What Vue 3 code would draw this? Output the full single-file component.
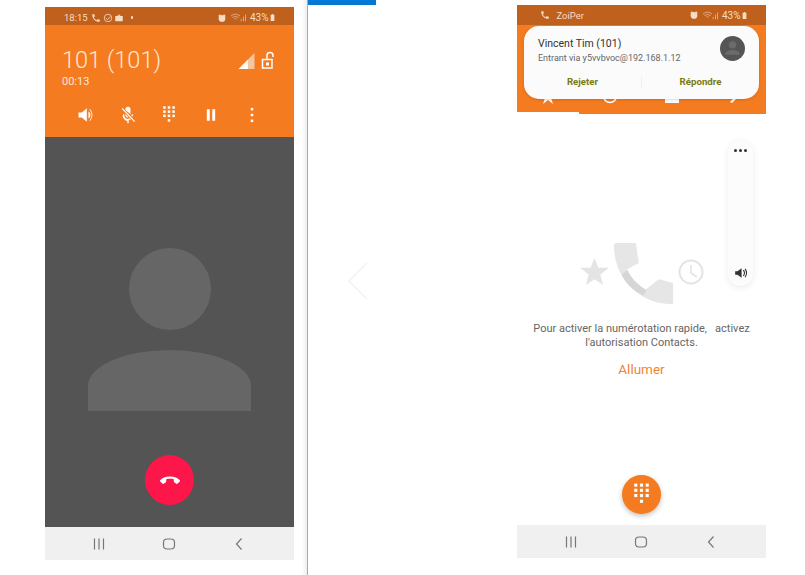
<template>
  <div class="page">
    <!-- Appel en cours -->
    <section class="phone phone-call">
      <div class="status status-call">
        <div class="status-left">
          <span class="time">18:15</span>
          <svg class="st-ic" viewBox="0 0 24 24"><path :d="phonePath" /></svg>
          <svg class="st-ic" viewBox="0 0 24 24"><circle cx="12" cy="12" r="9" fill="none" stroke="#f7d9c0" stroke-width="2" /><path d="M7 12l4 4 7-8" fill="none" stroke="#f7d9c0" stroke-width="2" /></svg>
          <svg class="st-ic" viewBox="0 0 24 24"><path d="M9 4h6v3h6v13H3V7h6zM11 6v1h2V6z" /></svg>
          <span class="dot"></span>
        </div>
        <div class="status-right">
          <svg class="st-ic" viewBox="0 0 24 24"><circle cx="12" cy="13" r="8" /><path d="M3 7l4-4 2 2-4 4zM21 7l-4-4-2 2 4 4z" /></svg>
          <svg class="st-wifi" viewBox="0 0 22 12"><path d="M1 4q6-5 12 0M3 6q4-3 8 0M5.500 8q1.500-1 3 0" fill="none" stroke="#eec0a0" stroke-width="1" /><path d="M14 11h1V8h-1zM17 11h1V5h-1zM20 11h1V2h-1z" fill="#eec0a0" /></svg>
          <span class="batt-txt">43%</span>
          <svg class="st-batt" viewBox="0 0 8 11"><path d="M3 0h2v1h2v10H1V1h2z" /></svg>
        </div>
      </div>
      <div class="call-head">
        <div class="call-top">
          <div>
            <div class="call-name">101 (101)</div>
            <div class="call-time">00:13</div>
          </div>
          <div class="call-state">
            <svg class="signal" viewBox="0 0 17 17"><path d="M17 0v17H10V7z" fill="#f6c6a0" /><path d="M10 7v10H0z" fill="#fff" /></svg>
            <svg class="lock" viewBox="0 0 14 18"><path d="M6 8V4.500a3 3 0 0 1 6 0V6" fill="none" stroke="#fff" stroke-width="1.500" /><path d="M1.500 8.500h9.500v8.500H1.500z" fill="none" stroke="#fff" stroke-width="1.500" /><rect x="5" y="11.500" width="3" height="3" fill="#fff" /></svg>
          </div>
        </div>
        <div class="call-actions">
          <svg class="act" viewBox="0 0 24 24"><path d="M3 9v6h4l6 5V4L7 9z" fill="#fff" /><path d="M15 7.500a5.500 5.500 0 0 1 0 9z" fill="#fff" /><path d="M16.500 5q5.500 7 0 14" fill="none" stroke="#fff" stroke-width="1" /></svg>
          <svg class="act" viewBox="0 0 24 24"><path d="M9 5a3 3 0 0 1 6 0v6l-6-5zM9 10.500V12a3 3 0 0 0 3.800 2.900zM6 11h1.600a4.400 4.400 0 0 0 6.600 5l1.200 1.200a6 6 0 0 1-2.600 1V22h-1.600v-2.800A6.500 6.500 0 0 1 6 11zM18 11a6 6 0 0 1-.8 3l-1.200-1.200a4 4 0 0 0 .4-1.800z" fill="#fff" /><path d="M5 4l15 16" stroke="#fff" stroke-width="1.500" /></svg>
          <svg class="act" viewBox="0 0 24 24"><rect v-for="d in keypadDots" :key="d.x + '-' + d.y" :x="d.x" :y="d.y" width="3" height="3" fill="#fff" /></svg>
          <svg class="act" viewBox="0 0 24 24"><path d="M7 5h3.500v14H7zM13.500 5H17v14h-3.500z" fill="#fff" /></svg>
          <svg class="act" viewBox="0 0 24 24"><rect x="10.500" y="3.500" width="3" height="3" fill="#fff" /><rect x="10.500" y="10.500" width="3" height="3" fill="#fff" /><rect x="10.500" y="17.500" width="3" height="3" fill="#fff" /></svg>
        </div>
      </div>
      <div class="call-body">
        <div class="avatar-head"></div>
        <div class="avatar-body"></div>
        <button class="hangup">
          <svg viewBox="0 0 24 24"><path d="M12 8.500c-4.500 0-8 1.600-9.800 3.800-.3.400-.3.800 0 1.100l2.200 2.200c.4.400.9.400 1.300.1l2.100-1.500c.3-.2.400-.5.400-.8v-2.200c1.200-.4 2.500-.5 3.800-.5s2.600.1 3.800.5v2.200c0 .3.100.6.400.8l2.100 1.500c.4.300.9.300 1.300-.1l2.200-2.200c.3-.3.300-.7 0-1.100C20 10.100 16.500 8.500 12 8.500z" fill="#fff" /></svg>
        </button>
      </div>
      <div class="navbar">
        <svg viewBox="0 0 16 16"><path d="M3.500 2.500v11M8 2.500v11M12.500 2.500v11" /></svg>
        <svg viewBox="0 0 16 16"><rect x="2.500" y="3" width="11" height="10" rx="3.500" /></svg>
        <svg viewBox="0 0 16 16"><path d="M10.500 2.500L5.500 8l5 5.500" /></svg>
      </div>
    </section>

    <div class="divider"></div>

    <div class="middle">
      <div class="blue-bar"></div>
      <svg class="chevron" viewBox="0 0 22 40"><path d="M20 2L2 20l18 18" /></svg>
    </div>

    <!-- Appel entrant -->
    <section class="phone phone-dial">
      <div class="status status-dial">
        <div class="status-left">
          <svg class="st-ic" viewBox="0 0 24 24"><path :d="phonePath" /></svg>
          <span class="app-name">ZoiPer</span>
        </div>
        <div class="status-right">
          <svg class="st-ic" viewBox="0 0 24 24"><circle cx="12" cy="13" r="8" /><path d="M3 7l4-4 2 2-4 4zM21 7l-4-4-2 2 4 4z" /></svg>
          <svg class="st-wifi" viewBox="0 0 22 12"><path d="M1 4q6-5 12 0M3 6q4-3 8 0M5.500 8q1.500-1 3 0" fill="none" stroke="#eec0a0" stroke-width="1" /><path d="M14 11h1V8h-1zM17 11h1V5h-1zM20 11h1V2h-1z" fill="#eec0a0" /></svg>
          <span class="batt-txt">43%</span>
          <svg class="st-batt" viewBox="0 0 8 11"><path d="M3 0h2v1h2v10H1V1h2z" /></svg>
        </div>
      </div>
      <div class="dial-head">
        <div class="tabs">
          <svg viewBox="0 0 16 16"><path d="M8 1l2 5h6l-5 4 2 6-5-4-5 4 2-6-5-4h6z" /></svg>
          <svg viewBox="0 0 16 16"><circle cx="8" cy="8" r="6.500" fill="none" stroke="#fff" stroke-width="1.500" /></svg>
          <svg viewBox="0 0 16 16"><rect x="1" y="2" width="14" height="13" /></svg>
          <svg viewBox="0 0 16 16"><path d="M4 14l6-6 1.500 1.500L6 15z" /></svg>
        </div>
        <div class="tab-line"></div>
      </div>
      <div class="incoming">
        <div class="inc-top">
          <div>
            <div class="inc-name">Vincent Tim (101)</div>
            <div class="inc-sub">Entrant via y5vvbvoc@192.168.1.12</div>
          </div>
          <div class="inc-avatar">
            <svg viewBox="0 0 24 24"><circle cx="12" cy="8.500" r="3.500" fill="#6b6b6b" /><path d="M5 18c0-3 3.500-4.500 7-4.500s7 1.500 7 4.500z" fill="#6b6b6b" /></svg>
          </div>
        </div>
        <div class="inc-actions">
          <span>Rejeter</span>
          <span>Répondre</span>
        </div>
      </div>
      <div class="dial-body">
        <div class="volume">
          <div class="vol-dots"><i></i><i></i><i></i></div>
          <svg class="vol-ic" viewBox="0 0 24 24"><path d="M2 9v6h4l7 5V4L6 9z" fill="#333" /><path d="M16 7q4 5 0 10M19 5q5 7 0 14" fill="none" stroke="#333" stroke-width="1.800" /></svg>
        </div>
        <div class="empty-art">
          <svg class="star" viewBox="0 0 30 30"><path d="M15 1l4 10h11l-9 7 3 11-9-6-9 6 3-11-9-7h11z" fill="#e4e4e4" /></svg>
          <svg class="big-phone" viewBox="0 0 64 64">
            <path d="M0 3c0-2 1-3 3-3h20l3 21-13 7c4 9 11 16 20 21l14-11 15 4v22h-3C30 64 0 40 0 3z" fill="#e6e6e6" />
            <path d="M8 33l6-5c4 9 11 16 20 21l-3 6C20 50 12 42 8 33z" fill="#d6d6d6" />
          </svg>
          <svg class="clock" viewBox="0 0 26 26"><circle cx="13" cy="13" r="11.500" fill="none" stroke="#e4e4e4" stroke-width="2" /><path d="M13 6v8l6 4" fill="none" stroke="#e4e4e4" stroke-width="1.600" /></svg>
        </div>
        <p class="hint">Pour activer la numérotation rapide,&nbsp;&nbsp; activez<br />l'autorisation Contacts.</p>
        <div class="enable">Allumer</div>
        <div class="spacer"></div>
        <button class="fab">
          <svg viewBox="0 0 24 24"><rect v-for="d in keypadDots" :key="d.x + '-' + d.y" :x="d.x" :y="d.y" width="3" height="3" fill="#fff" /></svg>
        </button>
      </div>
      <div class="navbar">
        <svg viewBox="0 0 16 16"><path d="M3.500 2.500v11M8 2.500v11M12.500 2.500v11" /></svg>
        <svg viewBox="0 0 16 16"><rect x="2.500" y="3" width="11" height="10" rx="3.500" /></svg>
        <svg viewBox="0 0 16 16"><path d="M10.500 2.500L5.500 8l5 5.500" /></svg>
      </div>
    </section>
  </div>
</template>

<script setup>
const phonePath = 'M6.600 10.800c1.400 2.800 3.800 5.100 6.600 6.600l2.200-2.200c.3-.3.700-.4 1-.2 1.100.4 2.300.6 3.600.6.600 0 1 .4 1 1V20c0 .6-.4 1-1 1C10.600 21 3 13.400 3 4c0-.6.400-1 1-1h3.500c.6 0 1 .4 1 1 0 1.300.2 2.500.6 3.600.1.300 0 .7-.2 1z'

// touches du clavier : 3 x 3 + le zéro
const keypadDots = []
for (const y of [1.5, 6.5, 11.5]) {
  for (const x of [5, 10.5, 16]) keypadDots.push({ x, y })
}
keypadDots.push({ x: 10.5, y: 17 })
</script>

<style>
html, body { background: #fff; overflow: hidden; }
</style>

<style scoped>
.page {
  display: flex;
  width: 805px;
  height: 575px;
  overflow: hidden;
  background: #fff;
  font-family: Roboto, "Liberation Sans", sans-serif;
}
.phone {
  display: flex;
  flex-direction: column;
  width: 249px;
  height: 553px;
  flex: none;
}
.phone-call { margin: 7px 0 0 45px; }
.phone-dial { margin: 5px 0 0 0; position: relative; }

.status {
  display: flex;
  justify-content: space-between;
  align-items: center;
  height: 18px;
  padding: 0 19px 0 19px;
  box-sizing: border-box;
  background: #bf601c;
  color: #f7dcc6;
  font-size: 9.500px;
  flex: none;
}
.status-call { padding-top: 3px; }
.status-dial { height: 20px; padding: 0 19px 0 23px; }
.status-left, .status-right { display: flex; align-items: center; gap: 1.500px; }
.status-left .time { margin-right: 2px; }
.batt-txt { font-size: 10px; }
.st-ic { width: 10px; height: 10px; fill: #f7dcc6; }
.st-wifi { width: 17px; height: 9px; margin: 0 1px 0 2px; }
.st-batt { width: 5px; height: 7px; fill: #f7dcc6; }
.dot { width: 2.500px; height: 2.500px; background: #f7dcc6; border-radius: 50%; margin-left: 5px; }
.app-name { margin-left: 5px; font-size: 9.500px; }

.call-head {
  display: flex;
  flex-direction: column;
  height: 112px;
  background: #f57b20;
  color: #fff;
  flex: none;
}
.call-top {
  display: flex;
  justify-content: space-between;
  padding: 20px 19px 0 17px;
}
.call-name { font-size: 23.500px; font-weight: 300; line-height: 30px; color: #fde6d4; }
.call-time { font-size: 11px; line-height: 14px; color: #fde6d4; }
.call-state { display: flex; align-items: flex-end; gap: 6px; height: 24px; }
.signal { width: 17px; height: 16px; }
.lock { width: 14px; height: 18px; }
.call-actions {
  display: flex;
  justify-content: space-between;
  padding: 16px 32px 0 31px;
}
.act { width: 20px; height: 20px; }

.call-body {
  flex: 1;
  background: #545454;
  display: flex;
  flex-direction: column;
  align-items: center;
  padding-top: 111px;
}
.avatar-head { width: 82px; height: 82px; border-radius: 50%; background: #666; }
.avatar-body {
  width: 163px;
  height: 61px;
  margin-top: 20px;
  background: #666;
  border-radius: 82px 82px 0 0 / 36px 36px 0 0;
}
.hangup {
  width: 49px;
  height: 50px;
  margin-top: 44px;
  border: none;
  border-radius: 50%;
  background: #fc1649;
  padding: 13px 12.500px;
}
.hangup svg { display: block; width: 24px; height: 24px; }

.navbar {
  display: flex;
  justify-content: space-between;
  align-items: center;
  height: 33px;
  padding: 0 47px 0 46px;
  background: #f0f0f0;
  flex: none;
}
.navbar svg { width: 16px; height: 16px; fill: none; stroke: #777; stroke-width: 1.200; }

.divider {
  width: 6px;
  height: 575px;
  margin-left: 8px;
  background: linear-gradient(to right, #fff, #eee 85%, #aaa 85%, #aaa);
  flex: none;
}
.middle {
  display: flex;
  flex-direction: column;
  width: 209px;
  flex: none;
}
.blue-bar { width: 68px; height: 5px; background: #0078d4; }
.chevron {
  width: 22px;
  height: 40px;
  margin: 256px 0 0 39px;
  fill: none;
  stroke: #f3f3f3;
  stroke-width: 1.500;
}

.dial-head {
  display: flex;
  flex-direction: column;
  justify-content: space-between;
  height: 89px;
  padding-top: 63px;
  box-sizing: border-box;
  background: #f57b20;
  flex: none;
}
.tabs {
  display: grid;
  grid-template-columns: repeat(4, 62px);
  justify-items: center;
}
.tabs svg { width: 16px; height: 16px; fill: #fff; }
.tab-line { width: 62px; height: 2px; background: #fff; }

.incoming {
  position: absolute;
  left: 7px;
  top: 21px;
  width: 235px;
  height: 73px;
  background: #fbfbfb;
  border-radius: 15px;
  box-shadow: 0 1px 3px rgba(0, 0, 0, 0.15);
}
.inc-top {
  display: flex;
  justify-content: space-between;
  padding: 11px 14px 0 14px;
}
.inc-name { font-size: 10.500px; line-height: 13px; color: #333; }
.inc-sub { font-size: 9px; line-height: 12px; margin-top: 2px; color: #666; }
.inc-avatar { width: 25px; height: 25px; border-radius: 50%; background: #555; margin-top: -1px; }
.inc-avatar svg { display: block; width: 25px; height: 25px; }
.inc-actions {
  display: flex;
  margin-top: 12px;
  font-size: 9.700px;
  line-height: 12px;
  font-weight: 700;
  color: #7a7a12;
  text-align: center;
}
.inc-actions span:first-child { width: 117px; border-right: 1px solid #f0f0f0; }
.inc-actions span:last-child { flex: 1; }

.dial-body {
  flex: 1;
  position: relative;
  display: flex;
  flex-direction: column;
  align-items: center;
  background: #fff;
  padding-top: 128px;
}
.volume {
  position: absolute;
  top: 26px;
  right: 13px;
  display: flex;
  flex-direction: column;
  justify-content: space-between;
  align-items: center;
  width: 25px;
  height: 146px;
  padding: 9px 0 6px;
  box-sizing: border-box;
  border-radius: 13px;
  background: #fcfcfc;
  box-shadow: 0 2px 7px rgba(0, 0, 0, 0.08);
}
.vol-dots { display: flex; gap: 2px; }
.vol-dots i { width: 3px; height: 3px; border-radius: 50%; background: #333; }
.vol-ic { width: 14px; height: 14px; }
.empty-art {
  display: flex;
  align-items: center;
  height: 62px;
}
.star { width: 29px; height: 29px; margin: -4px 5px 0 0; }
.big-phone { width: 61px; height: 61px; margin-right: 3px; }
.clock { width: 26px; height: 26px; margin-top: -2px; }
.hint {
  margin: 18px 0 0;
  font-size: 11px;
  line-height: 13.500px;
  text-align: center;
  color: #666;
  white-space: nowrap;
}
.enable { margin-top: 12px; font-size: 13.500px; line-height: 16px; color: #ef8433; }
.spacer { flex: 1; }
.fab {
  width: 39px;
  height: 39px;
  margin-bottom: 11px;
  padding: 7px;
  border: none;
  border-radius: 50%;
  background: #f57b20;
  box-shadow: 0 2px 5px rgba(0, 0, 0, 0.25);
}
.fab svg { display: block; width: 25px; height: 25px; }
</style>
